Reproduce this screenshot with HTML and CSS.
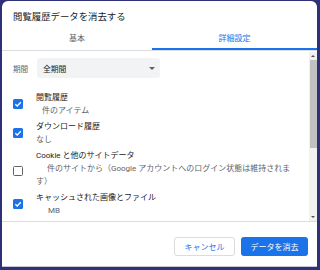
FILE: index.html
```html
<!DOCTYPE html>
<html lang="ja">
<head>
<meta charset="utf-8">
<link rel="stylesheet" href="styles.css">
</head>
<body>
<div class="dialog">
  <div class="title">閲覧履歴データを消去する</div>
  <div class="tabs">
    <div class="tab">基本</div>
    <div class="tab active">詳細設定</div>
  </div>
  <div class="body">
    <div class="content">
      <div class="period">
        <span class="plabel">期間</span>
        <div class="select"><span>全期間</span><span class="arrow"></span></div>
      </div>
      <div class="items">
        <div class="item">
          <span class="cb on"><svg viewBox="0 0 10 10"><path d="M2.3 5.2 L4.2 7 L7.8 3.2" fill="none" stroke="#fff" stroke-width="1.3"/></svg></span>
          <div class="txt"><div class="lbl">閲覧履歴</div><div class="sub ind6">件のアイテム</div></div>
        </div>
        <div class="item">
          <span class="cb on"><svg viewBox="0 0 10 10"><path d="M2.3 5.2 L4.2 7 L7.8 3.2" fill="none" stroke="#fff" stroke-width="1.3"/></svg></span>
          <div class="txt"><div class="lbl">ダウンロード履歴</div><div class="sub">なし</div></div>
        </div>
        <div class="item">
          <span class="cb off"></span>
          <div class="txt"><div class="lbl">Cookie と他のサイトデータ</div><div class="sub ind11">件のサイトから（Google アカウントへのログイン状態は維持されます）</div></div>
        </div>
        <div class="item">
          <span class="cb on"><svg viewBox="0 0 10 10"><path d="M2.3 5.2 L4.2 7 L7.8 3.2" fill="none" stroke="#fff" stroke-width="1.3"/></svg></span>
          <div class="txt"><div class="lbl">キャッシュされた画像とファイル</div><div class="sub ind12">MB</div></div>
        </div>
      </div>
    </div>
    <div class="scrollbar">
      <div class="sbtn"><span class="up"></span></div>
      <div class="thumb"></div>
      <div class="track"></div>
      <div class="sbtn"><span class="down"></span></div>
    </div>
  </div>
  <div class="footer">
    <button class="btn cancel">キャンセル</button>
    <button class="btn primary">データを消去</button>
  </div>
</div>
</body>
</html>
```
FILE: styles.css
```css
html, body {
  margin: 0;
  padding: 0;
  background: #2e3178;
  width: 320px;
  height: 270px;
  overflow: hidden;
}
body {
  font-family: Roboto, "Noto Sans CJK JP", sans-serif;
  color: #202124;
}
.dialog {
  margin: 1px 3px 0 2px;
  width: 315px;
  height: 266px;
  background: #fff;
  border-radius: 6px 6px 0 0;
  display: flex;
  flex-direction: column;
  overflow: hidden;
  border-bottom: 1px solid #c8c8d8;
  box-sizing: border-box;
}
.title {
  font-size: 9.4px;
  line-height: 12px;
  padding: 10px 0 0 11px;
  height: 17px;
  color: #202124;
}
.tabs {
  display: flex;
  height: 23px;
  border-bottom: 1px solid #dadce0;
  box-sizing: border-box;
}
.tab {
  width: 150px;
  font-size: 8px;
  line-height: 21px;
  text-align: center;
  color: #5f6368;
  border-bottom: 2px solid transparent;
}
.tab.active {
  flex: 1;
  color: #1a73e8;
  border-bottom-color: #1a73e8;
}
.body {
  display: flex;
  height: 170px;
  border-bottom: 1px solid #dadce0;
}
.content {
  flex: 1;
  overflow: hidden;
  padding-top: 7px;
}
.period {
  display: flex;
  align-items: center;
  height: 20px;
}
.plabel {
  font-size: 7.6px;
  color: #5f6368;
  width: 24px;
  padding-left: 11px;
}
.select {
  width: 123px;
  height: 20px;
  background: #f1f3f4;
  border-radius: 3px;
  display: flex;
  align-items: center;
  justify-content: space-between;
  padding: 0 5px 0 6px;
  box-sizing: border-box;
  font-size: 7.8px;
  color: #202124;
}
.arrow {
  width: 0;
  height: 0;
  border-left: 3px solid transparent;
  border-right: 3px solid transparent;
  border-top: 3px solid #5f6368;
}
.items {
  display: flex;
  flex-direction: column;
  gap: 3px;
  margin-top: 12.5px;
}
.item {
  display: flex;
  align-items: center;
}
.cb {
  width: 10px;
  height: 10px;
  margin: 0 13px 0 11px;
  border-radius: 1.5px;
  box-sizing: border-box;
  flex: none;
  display: flex;
}
.cb svg { width: 10px; height: 10px; }
.cb.on { background: #1a73e8; }
.cb.off { border: 1.3px solid #5f6368; margin-top: 6px; }
.txt {
  flex: 1;
  font-size: 8px;
  line-height: 13px;
  padding-right: 18px;
}
.lbl { color: #202124; }
.sub { color: #5f6368; }
.ind6 { text-indent: 6px; }
.ind11 { text-indent: 11px; }
.ind12 { text-indent: 12px; }
.scrollbar {
  width: 8px;
  margin-top: 1px;
  display: flex;
  flex-direction: column;
  background: #f1f1f1;
}
.sbtn {
  height: 8px;
  display: flex;
  align-items: center;
  justify-content: center;
}
.up, .down {
  width: 0;
  height: 0;
  border-left: 2px solid transparent;
  border-right: 2px solid transparent;
}
.up { border-bottom: 2px solid #505050; }
.down { border-top: 2px solid #505050; }
.thumb {
  height: 88px;
  background: #c1c1c1;
  margin: 0 0.5px;
}
.track { flex: 1; }
.footer {
  display: flex;
  justify-content: flex-end;
  gap: 6px;
  padding: 15px 9px 0 0;
}
.btn {
  height: 19px;
  font-family: Roboto, "Noto Sans CJK JP", sans-serif;
  font-size: 8px;
  border-radius: 3px;
  padding: 0;
  box-sizing: border-box;
}
.cancel {
  width: 61px;
  background: #fff;
  color: #1a73e8;
  border: 1px solid #dadce0;
}
.primary {
  width: 67px;
  background: #1a73e8;
  color: #fff;
  border: none;
}
```
